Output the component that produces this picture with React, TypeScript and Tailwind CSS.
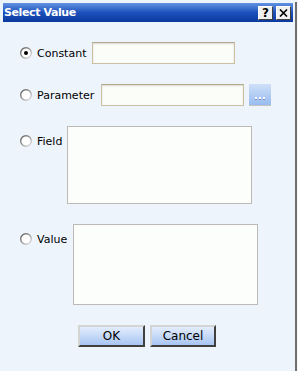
import React from "react";

function Radio({ checked }: { checked?: boolean }) {
  return (
    <svg width="12" height="12" viewBox="0 0 12 12" className="shrink-0">
      <defs>
        <linearGradient id="rg" x1="0" y1="0" x2="1" y2="1">
          <stop offset="0" stopColor="#5a5a5a" />
          <stop offset="0.5" stopColor="#9a9a9a" />
          <stop offset="1" stopColor="#e8e8e8" />
        </linearGradient>
      </defs>
      <circle cx="6" cy="6" r="5.3" fill="#ffffff" stroke="url(#rg)" strokeWidth="1.4" />
      {checked && <circle cx="6" cy="6" r="2" fill="#000" />}
    </svg>
  );
}

const font = { fontFamily: '"DejaVu Sans", Verdana, sans-serif' };

export default function App() {
  return (
    <div className="w-[298px] h-[371px] bg-[#edf4fc] flex overflow-hidden" style={font}>
      <div className="w-[295px] flex flex-col">
        {/* title bar */}
        <div className="mt-[3px] ml-[3px] mr-[2px] h-[19px] flex items-center bg-gradient-to-b from-[#6292e2] via-[#1d50bb] to-[#0a3a9e] pl-[1px] pr-[2px]">
          <span className="text-white font-bold text-[11px] tracking-[-0.4px] leading-none">Select Value</span>
          <div className="ml-auto flex gap-[3px]">
            <div className="w-[15px] h-[14px] bg-[#f0f0f0] border border-t-white border-l-white border-b-[#404040] border-r-[#404040] flex items-center justify-center text-black font-bold text-[12px] leading-none">
              ?
            </div>
            <div className="w-[15px] h-[14px] bg-[#f0f0f0] border border-t-white border-l-white border-b-[#404040] border-r-[#404040] flex items-center justify-center">
              <svg width="9" height="8" viewBox="0 0 9 8">
                <path d="M1 0.5 L8 7.5 M8 0.5 L1 7.5" stroke="#000" strokeWidth="1.6" />
              </svg>
            </div>
          </div>
        </div>

        <div className="pl-[20px] flex flex-col text-[11px] text-black">
          {/* Constant */}
          <div className="mt-[20px] h-[22px] flex items-center">
            <Radio checked />
            <span className="ml-[5px] leading-none">Constant</span>
            <div className="ml-[6px] w-[143px] h-[22px] bg-[#fbfdf8] border border-[#cdbfa4] border-t-[#b3a68d] shadow-[inset_0_1px_2px_#d8dad4]" />
          </div>
          {/* Parameter */}
          <div className="mt-[20px] h-[22px] flex items-center">
            <Radio />
            <span className="ml-[5px] leading-none">Parameter</span>
            <div className="ml-[7px] w-[143px] h-[22px] bg-[#fbfdf8] border border-[#cdbfa4] border-t-[#b3a68d] shadow-[inset_0_1px_2px_#d8dad4]" />
            <div className="ml-[5px] w-[22px] h-[22px] bg-gradient-to-b from-[#cfe0f8] to-[#98bbef] border-b border-[#c4c4c4] flex items-end justify-center pb-[5px]">
              <div className="flex gap-[2px]">
                <span className="w-[2px] h-[3px] bg-white border-b border-[#7a8aa8]" />
                <span className="w-[2px] h-[3px] bg-white border-b border-[#7a8aa8]" />
                <span className="w-[2px] h-[3px] bg-white border-b border-[#7a8aa8]" />
              </div>
            </div>
          </div>
          {/* Field */}
          <div className="mt-[20px] flex items-start">
            <div className="mt-[9px] flex items-center h-[12px]">
              <Radio />
              <span className="ml-[5px] leading-none">Field</span>
            </div>
            <div className="ml-[5px] w-[185px] h-[78px] bg-[#fcfefb] border border-[#bdbab5]" />
          </div>
          {/* Value */}
          <div className="mt-[20px] flex items-start">
            <div className="mt-[9px] flex items-center h-[12px]">
              <Radio />
              <span className="ml-[5px] leading-none">Value</span>
            </div>
            <div className="ml-[6px] w-[185px] h-[81px] bg-[#fcfefb] border border-[#bdbab5]" />
          </div>
        </div>

        {/* buttons */}
        <div className="mt-[20px] flex justify-center gap-[5px] pr-[1px]">
          <button className="w-[67px] h-[22px] border-2 border-t-[#d4d4d4] border-l-[#d4d4d4] border-b-[#404040] border-r-[#404040] bg-gradient-to-b from-[#e3edfc] to-[#a8c5f3] text-[12px] text-black leading-none">
            OK
          </button>
          <button className="w-[66px] h-[22px] border-2 border-t-[#d4d4d4] border-l-[#d4d4d4] border-b-[#404040] border-r-[#404040] bg-gradient-to-b from-[#e3edfc] to-[#a8c5f3] text-[12px] text-black leading-none">
            Cancel
          </button>
        </div>
      </div>
      <div className="w-[2px] mt-[2px] bg-[#6e6e6e]" />
      <div className="w-[1px] bg-[#f5f8fc]" />
    </div>
  );
}
